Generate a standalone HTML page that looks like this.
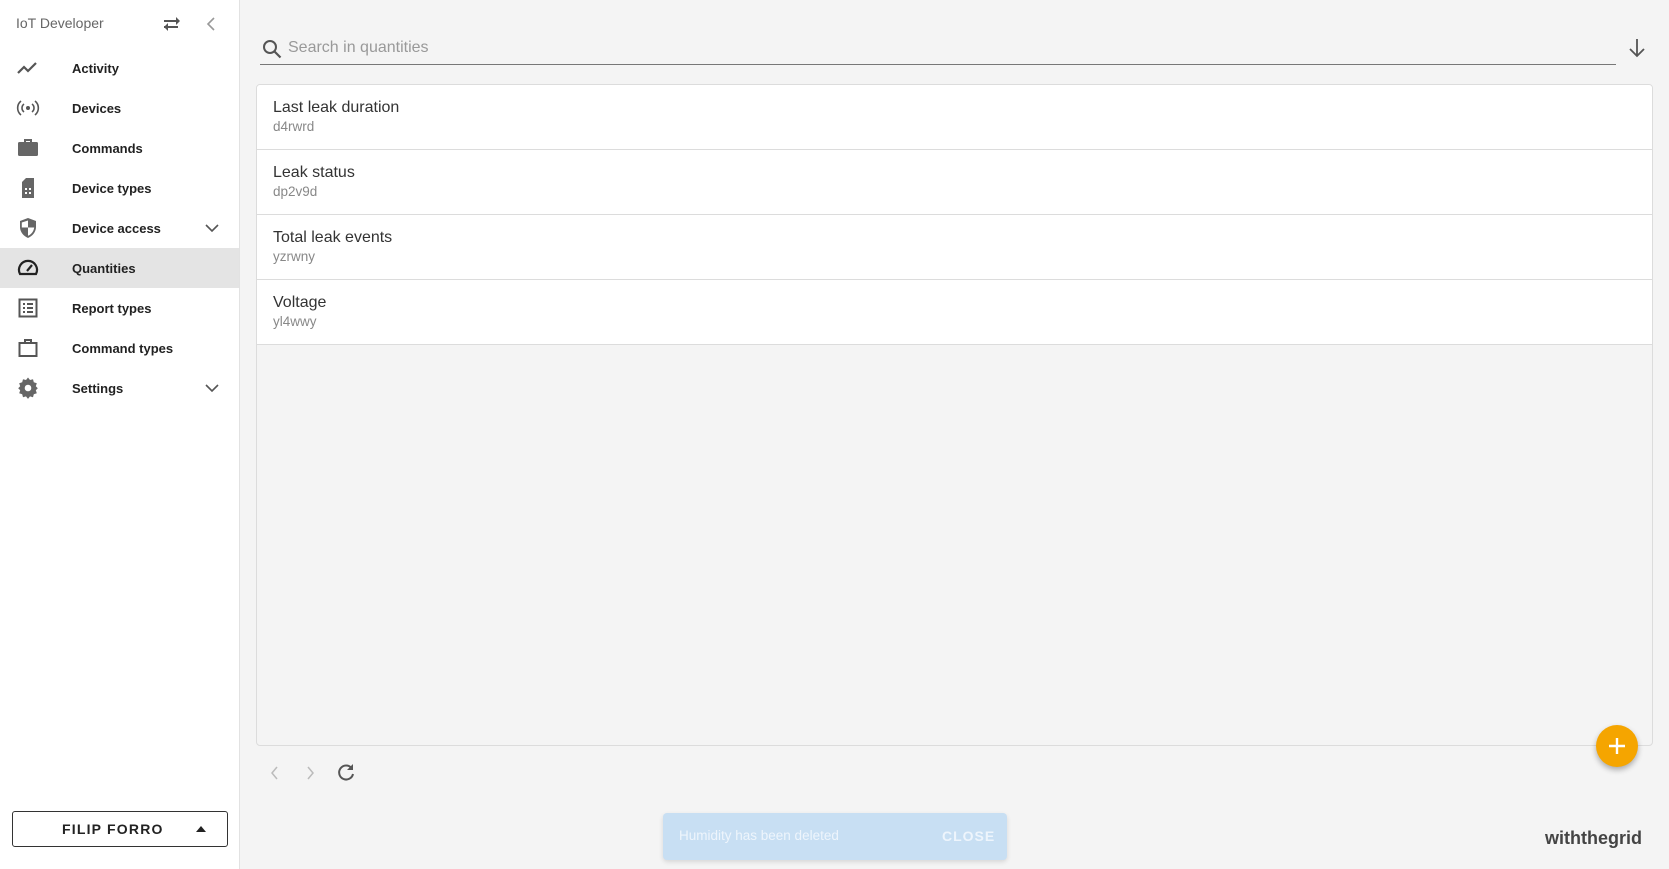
<!DOCTYPE html>
<html><head><meta charset="utf-8"><style>
*{box-sizing:border-box;margin:0;padding:0}
body{width:1669px;height:869px;overflow:hidden;background:#f4f4f4;font-family:"Liberation Sans",sans-serif;position:relative;color:#222}
.side{position:absolute;left:0;top:0;width:240px;height:869px;background:#fff;border-right:1px solid #e2e2e2}
.title{position:absolute;left:16px;top:15px;font-size:14px;color:#666}
.item{position:absolute;left:0;width:239px;height:40px;display:flex;align-items:center}
.item svg{position:absolute;left:16px;top:8px}
.item span{position:absolute;left:72px;top:13px;font-size:13px;font-weight:bold;color:#222}
.item .chev{position:absolute;left:204px;top:12px}
.sel{background:#e4e4e4}
.acct{position:absolute;left:12px;top:811px;width:216px;height:36px;border:1px solid #333;border-radius:3px;font-size:14px;font-weight:bold;letter-spacing:1.2px;color:#222;line-height:34px;padding-left:49px}
.acct i{position:absolute;left:183px;top:14px;width:0;height:0;border-left:5px solid transparent;border-right:5px solid transparent;border-bottom:6px solid #222}
.search{position:absolute;left:260px;top:30px;width:1356px;height:35px;border-bottom:1px solid #777}
.search span{position:absolute;left:28px;top:9px;font-size:16px;color:#999}
.card{position:absolute;left:256px;top:84px;width:1397px;height:662px;background:#f4f4f4;border:1px solid #dcdcdc;border-radius:4px;overflow:hidden}
.row{height:65px;background:#fff;border-bottom:1px solid #dcdcdc;padding:14px 16px 0}
.row b{display:block;font-weight:normal;font-size:16px;color:#333}
.row small{display:block;font-size:13.5px;color:#888;margin-top:2px}
.snack{position:absolute;left:663px;top:813px;width:344px;height:47px;background:#c8dff3;border-radius:4px;box-shadow:0 2px 5px rgba(0,0,0,.12)}
.snack span{position:absolute;left:16px;top:15px;font-size:13.5px;color:#eef5fc}
.snack b{position:absolute;left:279px;top:15px;font-size:14px;color:#eef5fc;letter-spacing:1px}
.fab{position:absolute;left:1596px;top:725px;width:42px;height:42px;border-radius:50%;background:#f5a500;box-shadow:0 3px 6px rgba(0,0,0,.3)}
.logo{position:absolute;left:1545px;top:828px;font-size:18px;font-weight:bold;color:#444;letter-spacing:0}
</style></head><body>
<div class="side">
<div class="title">IoT Developer</div>
<svg style="position:absolute;left:161px;top:15px" width="22" height="18" viewBox="0 0 22 18"><path d="M3 12h14M16 6H3" stroke="#555" stroke-width="2" fill="none"/><path d="M19 6l-4-4v8zM3 12l4-4v8z" fill="#555"/></svg>
<svg style="position:absolute;left:205px;top:16px" width="12" height="16" viewBox="0 0 12 16"><path d="M9 2L3 8l6 6" stroke="#999" stroke-width="1.6" fill="none"/></svg>
<div class="item" style="top:48px"><svg width="24" height="24" viewBox="0 0 24 24"><path d="M2 17l6-6 4 4 8-8" stroke="#555" stroke-width="2.2" fill="none"/></svg><span>Activity</span></div>
<div class="item" style="top:88px"><svg width="24" height="24" viewBox="0 0 24 24"><circle cx="12" cy="12" r="2" fill="#555"/><path d="M8 8a5 5 0 000 8M16 8a5 5 0 010 8M5 5a9 9 0 000 14M19 5a9 9 0 010 14" stroke="#555" stroke-width="1.6" fill="none"/></svg><span>Devices</span></div>
<div class="item" style="top:128px"><svg width="24" height="24" viewBox="0 0 24 24"><path d="M9 6V4h6v2" stroke="#666" stroke-width="2" fill="none"/><rect x="2" y="6" width="20" height="14" rx="1.5" fill="#666"/></svg><span>Commands</span></div>
<div class="item" style="top:168px"><svg width="24" height="24" viewBox="0 0 24 24"><path d="M10 2h8v20H6V6z" fill="#666"/><rect x="9" y="12" width="2" height="2" fill="#fff"/><rect x="13" y="12" width="2" height="2" fill="#fff"/><rect x="9" y="16" width="2" height="2" fill="#fff"/><rect x="13" y="16" width="2" height="2" fill="#fff"/></svg><span>Device types</span></div>
<div class="item" style="top:208px"><svg width="24" height="24" viewBox="0 0 24 24"><path d="M12 2l8 3v6c0 5-3.5 9-8 11-4.5-2-8-6-8-11V5z" fill="#666"/><path d="M12 4.5v7H5.8V6.5zM12 11.5h6.2c-.5 4-3 7-6.2 8.3z" fill="#fff"/></svg><span>Device access</span><svg class="chev" width="16" height="16" viewBox="0 0 16 16"><path d="M2 5l6 6 6-6" stroke="#555" stroke-width="1.6" fill="none"/></svg></div>
<div class="item sel" style="top:248px"><svg width="24" height="24" viewBox="0 0 24 24"><path d="M4 18a9 9 0 1116 0z" stroke="#222" stroke-width="2.2" fill="none"/><path d="M11 15l5-6" stroke="#222" stroke-width="2.2"/></svg><span>Quantities</span></div>
<div class="item" style="top:288px"><svg width="24" height="24" viewBox="0 0 24 24"><rect x="3.5" y="3.5" width="17" height="17" stroke="#555" stroke-width="2" fill="none"/><path d="M7 8h2M11 8h6M7 12h2M11 12h6M7 16h2M11 16h6" stroke="#555" stroke-width="2"/></svg><span>Report types</span></div>
<div class="item" style="top:328px"><svg width="24" height="24" viewBox="0 0 24 24"><path d="M3.5 7h17v13h-17zM9 7V4h6v3" stroke="#555" stroke-width="2" fill="none"/></svg><span>Command types</span></div>
<div class="item" style="top:368px"><svg width="24" height="24" viewBox="0 0 24 24"><path d="M12 1.5l2 2.5 3-.8.8 3 3 1-1 3 2 2-2 2 1 3-3 1-.8 3-3-.8-2 2.5-2-2.5-3 .8-.8-3-3-1 1-3-2-2 2-2-1-3 3-1 .8-3 3 .8z" fill="#666"/><circle cx="12" cy="12" r="3.3" fill="#fff"/></svg><span>Settings</span><svg class="chev" width="16" height="16" viewBox="0 0 16 16"><path d="M2 5l6 6 6-6" stroke="#555" stroke-width="1.6" fill="none"/></svg></div>
<div class="acct">FILIP FORRO<i></i></div>
</div>
<div class="search"><svg style="position:absolute;left:2px;top:9px" width="20" height="20" viewBox="0 0 20 20"><circle cx="8" cy="8" r="6" stroke="#555" stroke-width="2" fill="none"/><path d="M12.5 12.5l6 6" stroke="#555" stroke-width="2.2"/></svg><span>Search in quantities</span></div>
<svg style="position:absolute;left:1627px;top:37px" width="20" height="22" viewBox="0 0 20 22"><path d="M10 2v17M3 12l7 7 7-7" stroke="#555" stroke-width="1.8" fill="none"/></svg>
<div class="card">
<div class="row"><b>Last leak duration</b><small>d4rwrd</small></div>
<div class="row"><b>Leak status</b><small>dp2v9d</small></div>
<div class="row"><b>Total leak events</b><small>yzrwny</small></div>
<div class="row"><b>Voltage</b><small>yl4wwy</small></div>
</div>
<svg style="position:absolute;left:267px;top:765px" width="16" height="16" viewBox="0 0 16 16"><path d="M10 2L5 8l5 6" stroke="#bbb" stroke-width="1.5" fill="none"/></svg>
<svg style="position:absolute;left:302px;top:765px" width="16" height="16" viewBox="0 0 16 16"><path d="M6 2l5 6-5 6" stroke="#bbb" stroke-width="1.5" fill="none"/></svg>
<svg style="position:absolute;left:336px;top:763px" width="20" height="20" viewBox="0 0 20 20"><path d="M15.5 5A7 7 0 1017 11" stroke="#555" stroke-width="2" fill="none"/><path d="M17 1v6h-6z" fill="#555"/></svg>
<div class="fab"><svg style="position:absolute;left:11px;top:11px" width="20" height="20" viewBox="0 0 20 20"><path d="M10 2v16M2 10h16" stroke="#fff" stroke-width="2.4"/></svg></div>
<div class="snack"><span>Humidity has been deleted</span><b>CLOSE</b></div>
<div class="logo">withthegrid</div>
</body></html>
